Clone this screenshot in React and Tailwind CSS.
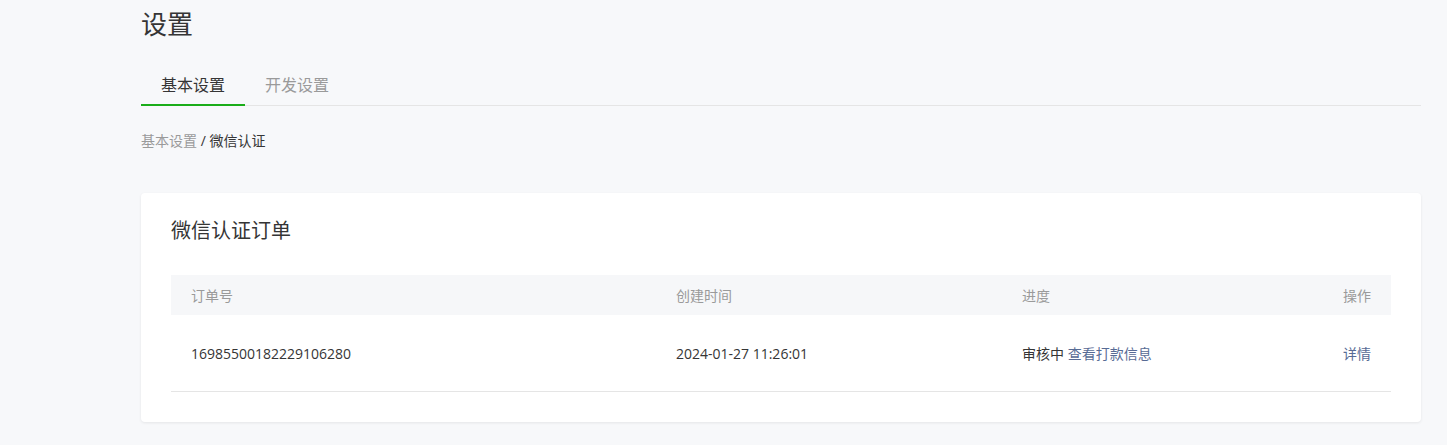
export default function App() {
  const font = { fontFamily: '"Open Sans", "Noto Sans CJK SC", sans-serif' };
  return (
    <div className="min-h-[445px] w-full bg-[#f7f8fa]" style={font}>
      <div className="ml-[141px] mr-[26px] pt-[6px]">
        {/* 页面标题 */}
        <h1 className="text-[26px] leading-[36px] text-[#353535]">设置</h1>

        {/* 标签页 */}
        <div className="mt-[23px] flex border-b border-[#e5e5e5]">
          <div className="relative px-5 h-[40px] flex items-center text-[16px] text-[#353535]">
            基本设置
            <span className="absolute left-0 right-0 bottom-[-1px] h-[2px] bg-[#1aad19]" />
          </div>
          <div className="px-5 h-[40px] flex items-center text-[16px] text-[#9a9a9a]">开发设置</div>
        </div>

        {/* 面包屑 */}
        <div className="mt-[25px] text-[14px] leading-[20px]">
          <span className="text-[#9a9a9a]">基本设置</span>
          <span className="text-[#353535]"> / 微信认证</span>
        </div>

        {/* 卡片 */}
        <div className="mt-[42px] rounded-[4px] bg-white px-[30px] pt-6 pb-[30px] shadow-[0_1px_3px_rgba(0,0,0,0.08)]">
          <h2 className="text-[20px] leading-7 text-[#353535]">微信认证订单</h2>

          <div className="mt-[30px] text-[14px]">
            <div className="grid grid-cols-[485px_346px_1fr_auto] h-[40px] items-center bg-[#f6f7f9] px-5 text-[#9a9a9a]">
              <div>订单号</div>
              <div>创建时间</div>
              <div>进度</div>
              <div className="text-right">操作</div>
            </div>
            <div className="grid grid-cols-[485px_346px_1fr_auto] h-[77px] items-center border-b border-[#e5e5e5] px-5 text-[#353535]">
              <div>16985500182229106280</div>
              <div>2024-01-27 11:26:01</div>
              <div>
                审核中 <span className="text-[#576b95] cursor-pointer">查看打款信息</span>
              </div>
              <div className="text-right text-[#576b95] cursor-pointer">详情</div>
            </div>
          </div>
        </div>
      </div>
    </div>
  );
}
